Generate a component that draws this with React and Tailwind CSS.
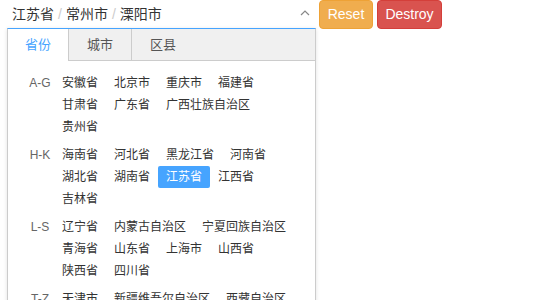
import React from "react";

const groups = [
  { letter: "A-G", items: ["安徽省", "北京市", "重庆市", "福建省", "甘肃省", "广东省", "广西壮族自治区", "贵州省"] },
  { letter: "H-K", items: ["海南省", "河北省", "黑龙江省", "河南省", "湖北省", "湖南省", "江苏省", "江西省", "吉林省"] },
  { letter: "L-S", items: ["辽宁省", "内蒙古自治区", "宁夏回族自治区", "青海省", "山东省", "上海市", "山西省", "陕西省", "四川省"] },
  { letter: "T-Z", items: ["天津市", "新疆维吾尔自治区", "西藏自治区", "云南省", "浙江省"] },
];

const selected = "江苏省";

const App = () => {
  return (
    <div className="flex items-start h-[300px] overflow-hidden bg-white font-['Liberation_Sans','Noto_Sans_CJK_SC',sans-serif] text-[#333]">
      {/* City picker */}
      <div className="w-[316px] flex flex-col">
        <div className="flex items-center h-[28px] pl-[12px] pr-[8px] text-[14px] text-[#333]">
          <span className="flex-1">
            江苏省<span className="text-[#ccc] mx-[4px]">/</span>常州市<span className="text-[#ccc] mx-[4px]">/</span>溧阳市
          </span>
          <svg width="10" height="6" viewBox="0 0 10 6" className="mr-[-2px] mb-[2px]">
            <path d="M1 5 L5 1 L9 5" fill="none" stroke="#888" strokeWidth="1.2" />
          </svg>
        </div>

        {/* Dropdown */}
        <div className="ml-[7px] bg-white border border-[#ccc] border-t-[#46a4ff] shadow-[0_1px_4px_rgba(0,0,0,0.12)]">
          <div className="flex h-[32px] bg-[#f0f0f0] border-b border-[#ccc] text-[13px]">
            <div className="w-[61px] text-center leading-[32px] bg-white text-[#46a4ff] border-r border-[#ccc] h-[32px]">省份</div>
            <div className="w-[63px] text-center leading-[32px] text-[#555] border-r border-[#ccc]">城市</div>
            <div className="w-[62px] text-center leading-[32px] text-[#555]">区县</div>
          </div>
          <div className="pt-[11px] pl-[10px] pr-[10px] text-[12px]">
            {groups.map((g) => (
              <div key={g.letter} className="flex pb-[6px]">
                <div className="w-[44px] shrink-0 text-center leading-[22px] text-[#666]">{g.letter}</div>
                <div className="flex flex-wrap ml-[-8px]">
                  {g.items.map((it) => (
                    <span
                      key={it}
                      className={
                        it === selected
                          ? "px-[8px] leading-[22px] bg-[#46a4ff] text-white rounded-[2px]"
                          : "px-[8px] leading-[22px] text-[#333]"
                      }
                    >
                      {it}
                    </span>
                  ))}
                </div>
              </div>
            ))}
          </div>
        </div>
      </div>

      {/* Buttons */}
      <button className="ml-[3px] w-[54px] h-[29px] rounded-[4px] bg-[#f0ad4e] border border-[#eea236] text-white text-[14px]">
        Reset
      </button>
      <button className="ml-[4px] w-[65px] h-[29px] rounded-[4px] bg-[#d9534f] border border-[#d43f3a] text-white text-[14px]">
        Destroy
      </button>
    </div>
  );
};

export default App;
